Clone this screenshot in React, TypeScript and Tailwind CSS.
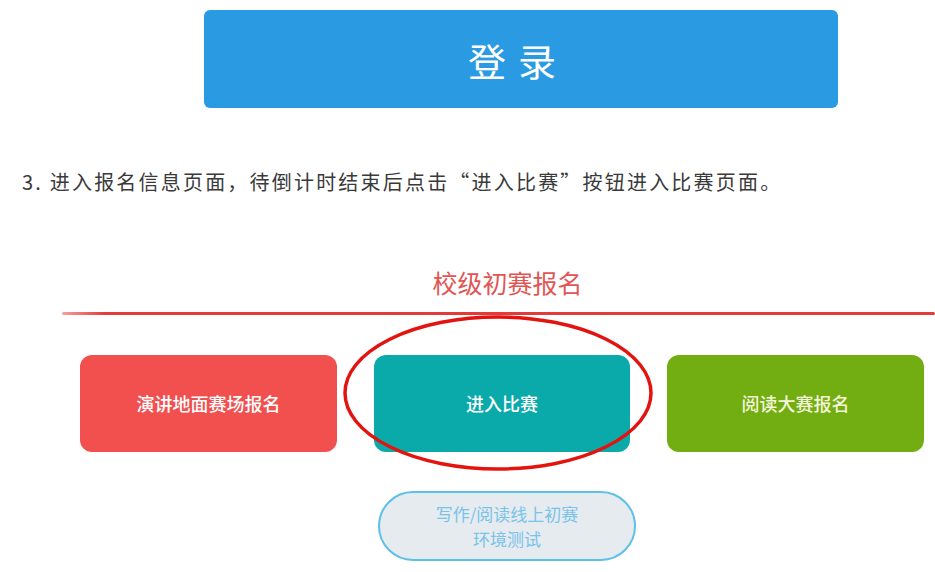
const cjk = "font-['Noto_Sans_CJK_SC','Noto_Sans',sans-serif]";

export default function App() {
  return (
    <div className={`w-[935px] h-[572px] overflow-hidden bg-white ${cjk}`}>
      {/* login button screenshot */}
      <div className="pt-[10px] pl-[204px]">
        <div className="w-[634px] h-[98px] rounded-[6px] bg-[#2a9ae3] flex items-center justify-center text-white text-[38px] tracking-[12px] pr-[6px]">
          登录
        </div>
      </div>

      <p className="mt-[62px] pl-[22px] text-[20px] leading-[24px] text-[#3a3a3a] tracking-[2.2px]">
        3. 进入报名信息页面，待倒计时结束后点击“进入比赛”按钮进入比赛页面。
      </p>

      {/* registration page screenshot */}
      <div className="relative mt-[73px]">
        <div className="text-center pl-[80px] text-[25px] leading-[30px] text-[#e25555]">校级初赛报名</div>
        <div className="mt-[15px] ml-[62px] h-[3px] rounded-full bg-[linear-gradient(to_right,#f4a0a0,#e53a3a_5%,#e53a3a)]" />

        <div className="mt-[40px] pl-[80px] flex gap-[37px]">
          <div className="w-[257px] h-[97px] rounded-[12px] bg-[#f24f4f] flex items-center justify-center text-white text-[18px] font-medium">
            演讲地面赛场报名
          </div>
          <div className="w-[256px] h-[97px] rounded-[12px] bg-[#0aaaaa] flex items-center justify-center text-white text-[18px] font-medium">
            进入比赛
          </div>
          <div className="w-[257px] h-[97px] rounded-[12px] bg-[#72ad12] flex items-center justify-center text-[#f3f6d8] text-[18px] font-medium">
            阅读大赛报名
          </div>
        </div>

        <div className="mt-[39px] ml-[378px] w-[258px] h-[70px] rounded-full border-2 border-[#5cc0e9] bg-[#e5ebef] flex flex-col items-center justify-center text-[#79c3ea] text-[17px] leading-[25px]">
          <span>写作/阅读线上初赛</span>
          <span>环境测试</span>
        </div>

        <svg className="absolute left-[341px] top-[47px]" width="314" height="160" viewBox="0 0 314 160">
          <ellipse cx="157" cy="79" rx="153" ry="76" fill="none" stroke="#e3130f" strokeWidth="3.5" />
        </svg>
      </div>
    </div>
  );
}
